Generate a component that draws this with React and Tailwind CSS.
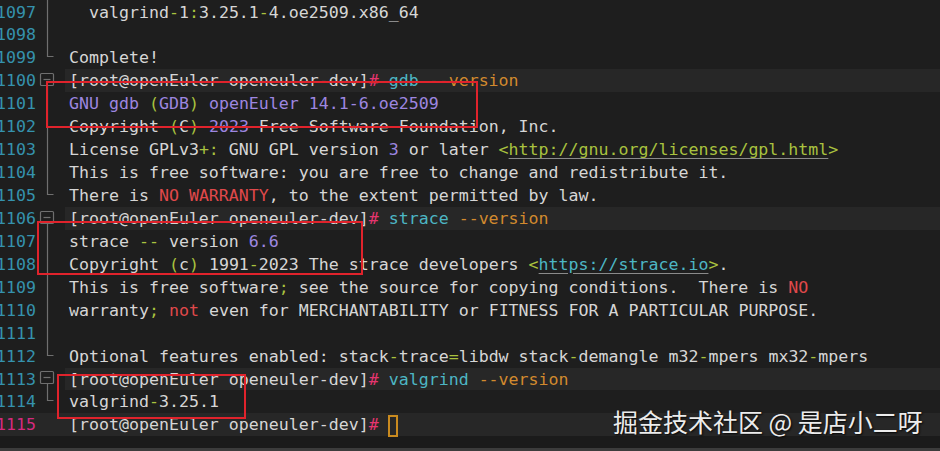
import React from "react";

const tone = {
  fg: "text-[#d6d6d6]",
  g: "text-[#a9c23f]",
  gu: "text-[#a9c23f] underline decoration-[#8a8a8a] underline-offset-[3px]",
  p: "text-[#9d86e0]",
  r: "text-[#e0494b]",
  t: "text-[#4db6c4]",
  tu: "text-[#4db6c4] underline decoration-[#8a8a8a] underline-offset-[3px]",
  o: "text-[#d28a2e]",
  h: "text-[#e5356f]",
};

const prompt = (cmd) => [
  ["[root@openEuler openeuler-dev]"],
  ["#", "h"],
  [" " + cmd, "t"],
  [" --version", "o"],
];

const rows = [
  { n: 1097, fold: "line", segs: [["  valgrind"], ["-", "g"], ["1"], [":", "g"], ["3.25.1"], ["-", "g"], ["4.oe2509.x86_64"]] },
  { n: 1098, fold: "line", segs: [] },
  { n: 1099, fold: "end", segs: [["Complete!"]] },
  { n: 1100, fold: "open", band: true, segs: prompt("gdb") },
  { n: 1101, fold: "line", segs: [["GNU gdb ", "p"], ["(", "g"], ["GDB", "p"], [")", "g"], [" openEuler 14.1-6.oe2509", "p"]] },
  { n: 1102, fold: "line", segs: [["Copyright "], ["(", "g"], ["C"], [")", "g"], [" "], ["2023", "p"], [" Free Software Foundation, Inc."]] },
  { n: 1103, fold: "line", segs: [["License GPLv3"], ["+:", "g"], [" GNU GPL version "], ["3", "p"], [" or later "], ["<", "g"], ["http://gnu.org/licenses/gpl.html", "gu"], [">", "g"]] },
  { n: 1104, fold: "line", segs: [["This is free software: you are free to change and redistribute it."]] },
  { n: 1105, fold: "end", segs: [["There is "], ["NO WARRANTY", "r"], [", to the extent permitted by law."]] },
  { n: 1106, fold: "open", band: true, segs: prompt("strace") },
  { n: 1107, fold: "line", segs: [["strace "], ["--", "g"], [" version "], ["6.6", "p"]] },
  { n: 1108, fold: "line", segs: [["Copyright "], ["(", "g"], ["c"], [")", "g"], [" 1991"], ["-", "g"], ["2023 The strace developers "], ["<", "g"], ["https://strace.io", "tu"], [">", "g"], ["."]] },
  { n: 1109, fold: "line", segs: [["This is free software"], [";", "g"], [" see the source for copying conditions.  There is "], ["NO", "r"]] },
  { n: 1110, fold: "line", segs: [["warranty"], [";", "g"], [" "], ["not", "r"], [" even for MERCHANTABILITY or FITNESS FOR A PARTICULAR PURPOSE."]] },
  { n: 1111, fold: "line", segs: [] },
  { n: 1112, fold: "end", segs: [["Optional features enabled: stack"], ["-", "g"], ["trace"], ["=", "g"], ["libdw stack"], ["-", "g"], ["demangle m32"], ["-", "g"], ["mpers mx32"], ["-", "g"], ["mpers"]] },
  { n: 1113, fold: "open", band: true, segs: prompt("valgrind") },
  { n: 1114, fold: "end", segs: [["valgrind"], ["-", "g"], ["3.25.1"]] },
  { n: 1115, fold: "none", band: true, current: true, segs: [["[root@openEuler openeuler-dev]"], ["#", "h"], [" "]], cursor: true },
];

const FoldMark = ({ type }) => (
  <svg width="29" height="23" viewBox="0 0 29 23" className="shrink-0" fill="none" stroke="#6f6f6f" strokeWidth="1.2">
    {type === "line" && <line x1="11.5" y1="0" x2="11.5" y2="23" />}
    {type === "end" && <path d="M11.5 0 V10.5 H17.5" />}
    {type === "open" && (
      <>
        <rect x="4.5" y="4.5" width="13" height="12" rx="1" />
        <line x1="7.5" y1="10.5" x2="14.5" y2="10.5" />
        <line x1="11.5" y1="16.5" x2="11.5" y2="23" />
      </>
    )}
  </svg>
);

const Row = ({ row }) => (
  <div className={`flex h-[22.95px] items-center ${row.current ? "bg-[#272727]" : ""}`}>
    <div className={`flex w-[36px] shrink-0 justify-end pt-[2px] ${row.current ? "text-[#d42a7e]" : "text-[#3592ad]"}`}>
      <span className="shrink-0">{row.n}</span>
    </div>
    <FoldMark type={row.fold} />
    <div className={`flex h-full flex-1 items-center whitespace-pre pl-[4px] pt-[2px] ${row.band ? "bg-[#272727]" : ""}`}>
      {row.segs.map(([text, t = "fg"], i) => (
        <span key={i} className={tone[t]}>
          {text}
        </span>
      ))}
      {row.cursor && <span className="ml-[-1px] inline-block h-[22px] w-[10px] border-2 border-[#c98a1f]" />}
    </div>
  </div>
);

export default function App() {
  return (
    <div className="relative h-[451px] w-[940px] overflow-hidden bg-[#1e1e1e] font-['DejaVu_Sans_Mono',monospace] text-[16.6px] leading-[22.95px]">
      <div className="flex flex-col pt-[0.5px]">
        {rows.map((row) => (
          <Row key={row.n} row={row} />
        ))}
      </div>
      <div className="h-[11.5px] bg-[#1b1b1b]" />
      <div className="h-[3px] bg-[#3c3c3c]" />

      <div className="absolute left-[46px] top-[81px] h-[47px] w-[432px] border-2 border-[#e0232c]" />
      <div className="absolute left-[37px] top-[221px] h-[54px] w-[326px] border-2 border-[#e0232c]" />
      <div className="absolute left-[57px] top-[374px] h-[45px] w-[189px] border-2 border-[#e0232c]" />

      <div className="absolute left-[613px] top-[404px] whitespace-pre font-['Noto_Sans_CJK_SC',sans-serif] text-[25px] leading-[34px] text-[#ececec] [text-shadow:1px_1px_2px_rgba(0,0,0,0.9)]">
        掘金技术社区 @ 是店小二呀
      </div>
    </div>
  );
}
